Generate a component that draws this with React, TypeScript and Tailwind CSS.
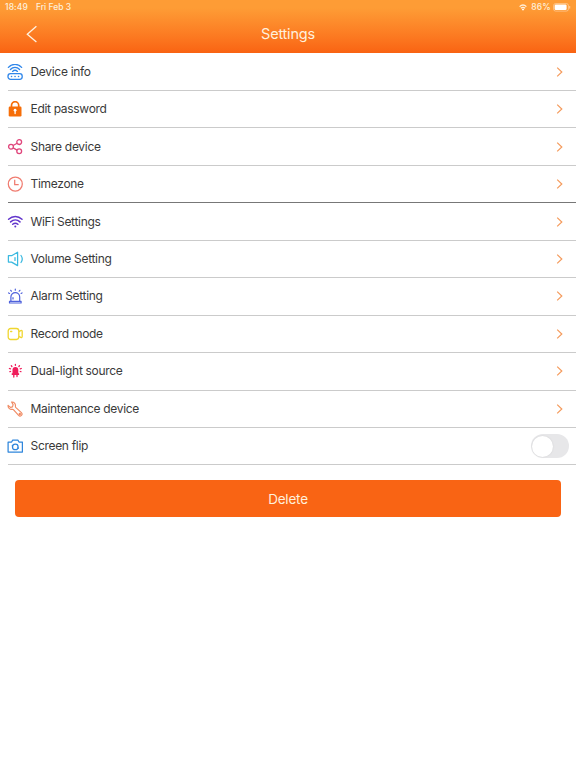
import React, { useState } from 'react';

const icon = 'w-4 h-4 shrink-0';

const RouterIcon = () => (
  <svg viewBox="0 0 16 16" className={icon} fill="none" stroke="#2f86ea" strokeWidth="1.3" strokeLinecap="round">
    <path d="M1.4 3.4C5 -0.6 11 -0.6 14.6 3.4" />
    <path d="M3.4 5.5C6 2.7 10 2.7 12.6 5.5" />
    <path d="M5.5 7.4C7 6 9 6 10.5 7.4" />
    <rect x="1" y="9.7" width="14.2" height="5.6" rx="2.5" />
    <path d="M4.5 12.5h.1M8 12.5h.1M11.5 12.5h.1" strokeWidth="1.5" />
  </svg>
);

const LockIcon = () => (
  <svg viewBox="0 0 16 16" className={icon} fill="none">
    <path d="M4.5 7V4.3a3.6 3.6 0 0 1 7.2 0V7" stroke="#f66e08" strokeWidth="1.7" />
    <rect x="1.7" y="5.5" width="12.8" height="10" rx="1.2" fill="#f66e08" />
    <circle cx="8.1" cy="9.2" r="1.4" fill="#fff" />
    <path d="M8.1 9.6v3" stroke="#fff" strokeWidth="1.3" strokeLinecap="round" />
  </svg>
);

const ShareIcon = () => (
  <svg viewBox="0 0 16 16" className={icon} fill="none" stroke="#e0467c" strokeWidth="1.3">
    <circle cx="4" cy="7.7" r="2.4" />
    <circle cx="12.2" cy="3.1" r="2.4" />
    <circle cx="12.2" cy="12.3" r="2.4" />
    <path d="M6.1 6.5l4-2.2M6.1 8.9l4 2.2" />
  </svg>
);

const ClockIcon = () => (
  <svg viewBox="0 0 16 16" className={icon} fill="none" stroke="#f07c70" strokeWidth="1.25">
    <circle cx="8.3" cy="8" r="7" />
    <path d="M7.7 3.8v4.9h4" />
  </svg>
);

const WifiIcon = () => (
  <svg viewBox="0 0 16 16" className={icon} fill="none" stroke="#6235cc" strokeWidth="1.5" strokeLinecap="round">
    <path d="M1.6 5.3c3.9-3.7 9.5-3.7 13.4 0" />
    <path d="M3.6 7.9c2.8-2.6 6.6-2.6 9.4 0" />
    <path d="M5.7 10.3c1.6-1.4 3.6-1.4 5.2 0" />
    <circle cx="8.3" cy="12.5" r="1" fill="#6235cc" stroke="none" />
  </svg>
);

const VolumeIcon = () => (
  <svg viewBox="0 0 16 16" className={icon} fill="none" stroke="#3bb9e0" strokeWidth="1.25" strokeLinejoin="round" strokeLinecap="round">
    <path d="M1.4 4.7h3.2L10.6 1.2v13.4L4.6 11.1H1.4z" />
    <path d="M8 6.6v2.8M14 4.5c1.6 2.2 1.6 4.8 0 7" />
  </svg>
);

const AlarmIcon = () => (
  <svg viewBox="0 0 16 16" className={icon} fill="none" stroke="#4f62dc" strokeWidth="1.2" strokeLinecap="round">
    <path d="M3.9 13V9a4.4 4.4 0 0 1 8.8 0v4" />
    <path d="M2.5 13.3h11.6v1.7H2.5z" strokeLinejoin="round" />
    <path d="M8.3 1v1.2M3.7 2.3l.7.9M12.9 2.3l-.7.9M1.6 4.9l.9.5M15 4.9l-.9.5M6 11V9.7" />
  </svg>
);

const RecordIcon = () => (
  <svg viewBox="0 0 16 16" className={icon} fill="none" stroke="#f0d62f" strokeWidth="1.3" strokeLinejoin="round">
    <rect x="1.2" y="2.5" width="10.6" height="11" rx="2.4" />
    <path d="M11.8 5.6l2-1c.8-.4 1.4 0 1.4.8v5.2c0 .8-.6 1.2-1.4.8l-2-1" />
    <path d="M3.6 5.5h1.2" strokeLinecap="round" />
  </svg>
);

const LightIcon = () => (
  <svg viewBox="0 0 16 16" className={icon} fill="none" stroke="#ef1d5b" strokeWidth="1.3" strokeLinecap="round">
    <path d="M5.5 10.2V6.8a2.9 2.9 0 0 1 5.8 0v3.4h.8v1.7H4.7v-1.7z" fill="#ef1d5b" stroke="none" />
    <path d="M6.8 11.9v2.2M10 11.9v1.6" />
    <path d="M8.4 1.5v.8M4.3 2.7l.6.8M12.5 2.7l-.6.8M2.4 5.5l1.1.4M14.3 5.5l-1.1.4M2.9 8.7l.7-.2M13.9 8.7l-.7-.2" />
  </svg>
);

const WrenchIcon = () => (
  <svg viewBox="0 0 16 16" className={icon} fill="none" stroke="#f08a62" strokeWidth="1.15" strokeLinejoin="round">
    <path d="M4.6 1c2.5-.2 4.2 1.7 3.8 4.2-.1.5 0 .8.3 1.1l5.7 5.3c1.8 1.8-.9 4.6-2.8 2.8L6.4 8.7c-.3-.3-.7-.4-1.1-.3C2.8 8.7.8 6.8 1.1 4.4l2.3 2 2.1-.5.6-2.3z" />
    <circle cx="12.8" cy="13" r=".6" />
  </svg>
);

const CameraIcon = () => (
  <svg viewBox="0 0 16 16" className={icon} fill="none" stroke="#2f86dc" strokeWidth="1.25" strokeLinejoin="round">
    <path d="M1.1 4h3.5l1.1-1.8h5.2L12 4h3.4v10H1.1z" />
    <circle cx="8.3" cy="8.9" r="2.8" />
    <path d="M4.8 7.4l1.2.8M11.8 10.4l-1.2-.8" />
  </svg>
);

const items = [
  { label: 'Device info', Icon: RouterIcon },
  { label: 'Edit password', Icon: LockIcon },
  { label: 'Share device', Icon: ShareIcon },
  { label: 'Timezone', Icon: ClockIcon, dark: true },
  { label: 'WiFi Settings', Icon: WifiIcon },
  { label: 'Volume Setting', Icon: VolumeIcon },
  { label: 'Alarm Setting', Icon: AlarmIcon },
  { label: 'Record mode', Icon: RecordIcon },
  { label: 'Dual-light source', Icon: LightIcon },
  { label: 'Maintenance device', Icon: WrenchIcon },
  { label: 'Screen flip', Icon: CameraIcon, toggle: true },
];

const StatusBar: React.FC = () => (
  <div className="flex h-[15px] items-center justify-between pl-[5px] pr-[5px] text-[8.5px] font-medium leading-none text-[#fff0dc]">
    <div className="flex gap-[8px]">
      <span className="tracking-[0.1px]">18:49</span>
      <span>Fri Feb 3</span>
    </div>
    <div className="flex items-center">
      <svg viewBox="0 0 8 7" className="mr-[4px] h-[7px] w-2" fill="none" stroke="#fff0dc" strokeWidth="1.3">
        <path d="M.6 2.6c2-1.9 4.8-1.9 6.8 0M1.9 4.3c1.2-1.1 3-1.1 4.2 0" />
        <path d="M2.8 5.3c.7-.6 1.7-.6 2.4 0L4 6.7z" fill="#fff" stroke="none" />
      </svg>
      <span className="tracking-[0.2px]">86%</span>
      <svg viewBox="0 0 18 9" className="ml-[2px] h-[9px] w-[18px]" fill="none">
        <rect x=".5" y=".5" width="15" height="7.6" rx="2.2" stroke="#fff" strokeOpacity=".45" strokeWidth=".8" />
        <rect x="1.6" y="1.6" width="12" height="5.4" rx="1.2" fill="#fff" />
        <path d="M16.7 3v2.6" stroke="#fff" strokeOpacity=".5" />
      </svg>
    </div>
  </div>
);

const App: React.FC = () => {
  const [flipped, setFlipped] = useState(false);

  return (
    <div className="min-h-screen bg-white font-['Inter','Liberation_Sans',sans-serif]">
      {/* Header */}
      <header className="h-[53px] bg-linear-to-b from-[#fe9c35] from-15% to-[#f96312]">
        <StatusBar />
        <div className="grid h-[38px] grid-cols-[1fr_auto_1fr] items-center">
          <button aria-label="Back" className="ml-[26px] w-3">
            <svg viewBox="0 0 12 18" className="h-[18px] w-3" fill="none" stroke="#fff3e2" strokeWidth="1.3">
              <path d="M10.4 1.2L1.3 9.2l9.1 7.8" />
            </svg>
          </button>
          <h1 className="text-[14.5px] leading-none tracking-[-0.2px] text-[#fff0dc]">Settings</h1>
        </div>
      </header>

      {/* Settings list */}
      <ul className="pl-2 pt-[0.6px]">
        {items.map(({ label, Icon, dark, toggle }) => (
          <li
            key={label}
            className={`flex h-[37.45px] items-center border-b ${dark ? 'border-[#777]' : 'border-[#cbcbcb]'}`}
          >
            <div className="-ml-px flex items-center gap-[7.5px]">
              <Icon />
              <span className="text-[12px] leading-[16px] tracking-[-0.31px] text-[#3a3a3a]">{label}</span>
            </div>
            {toggle ? (
              <button
                role="switch"
                aria-checked={flipped}
                aria-label={label}
                onClick={() => setFlipped(!flipped)}
                className={`ml-auto mr-[7px] flex h-[24px] w-[38.5px] items-center rounded-full bg-[#e7e7e9] p-[1.5px] ${flipped ? 'justify-end' : 'justify-start'}`}
              >
                <span className="h-[21px] w-[21px] rounded-full bg-white shadow-[0_0_2px_rgba(0,0,0,0.1)]" />
              </button>
            ) : (
              <svg viewBox="0 0 7 10" className="ml-auto mr-[13px] h-[10px] w-[7px]" fill="none" stroke="#f59b5c" strokeWidth="1.2">
                <path d="M1.2.6L5.8 5 1.2 9.4" />
              </svg>
            )}
          </li>
        ))}
      </ul>

      <div className="px-[15px] pt-[14.6px]">
        <button className="block h-[37.4px] w-full rounded-[4px] bg-[#f96414] pt-px text-[13.5px] tracking-[-0.2px] text-[#fff0dc]">
          Delete
        </button>
      </div>
    </div>
  );
};

export default App;
